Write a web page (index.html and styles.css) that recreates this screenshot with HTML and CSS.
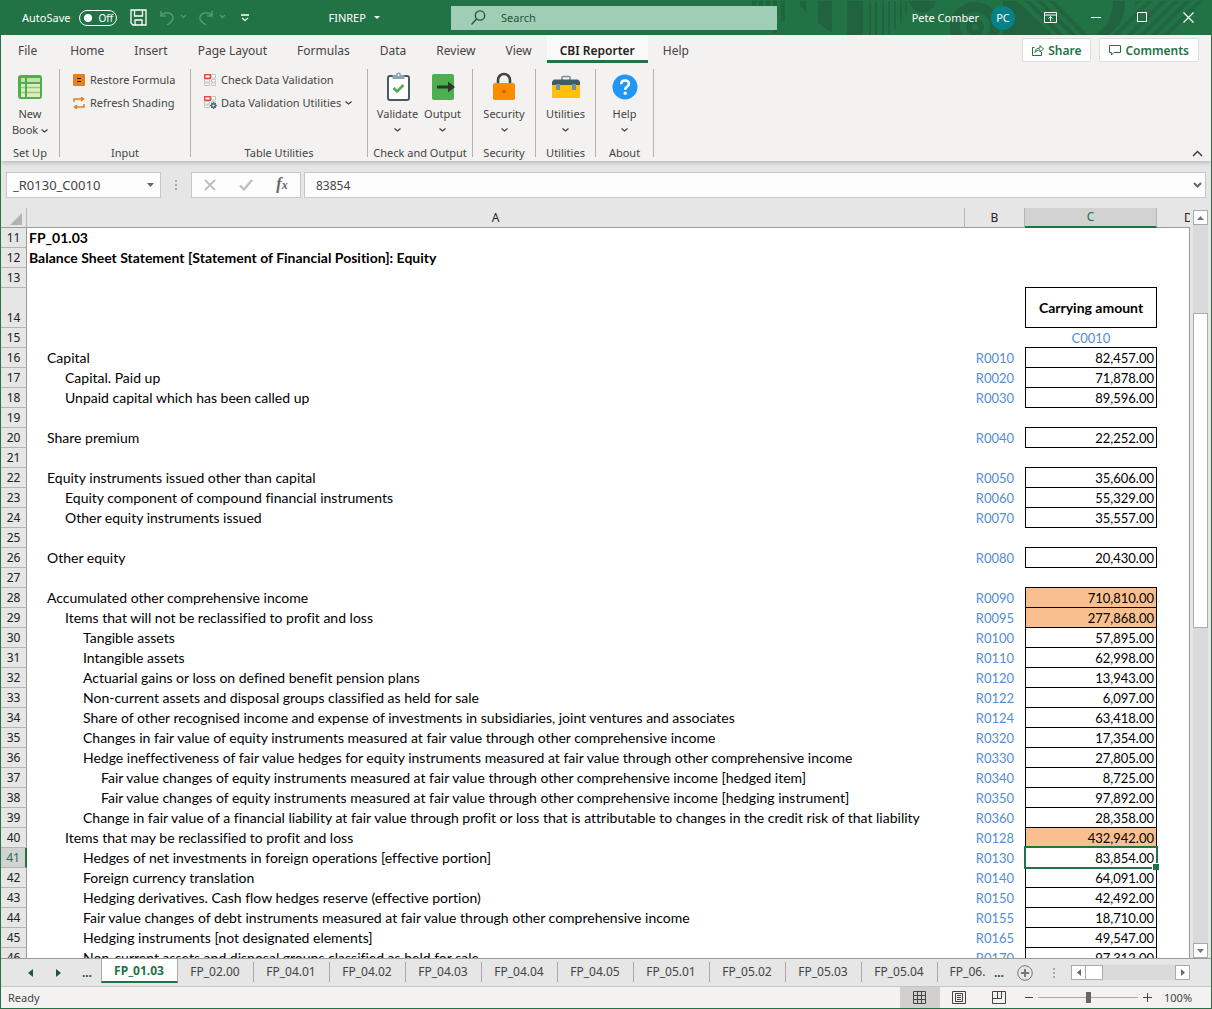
FILE: index.html
```html
<!DOCTYPE html>
<html lang="en">
<head>
<meta charset="utf-8">
<title>FINREP</title>
<link rel="stylesheet" href="styles.css">
</head>
<body>
<div class="window">

<header class="titlebar">
  <svg class="pattern" viewBox="0 0 460 35" width="460" height="35" aria-hidden="true">
    <g fill="#21633f">
      <path d="M1 1h4v5h-4zM8 1h4v5h-4zM15 1h4v5h-4zM22 1h4v5h-4zM30 1h4v20h-4zM22 29h4v4h-4z"/>
      <path d="M49 1h6v12l-6-8zM67 1h14v32l-14-10zM96 1h14v34h-14z"/>
      <path d="M110 1h2v34h-2zM118 1h2v34h-2zM124 1h2v34h-2zM131 1h2v34h-2zM137 1h2v33h-2zM143 1h2v28h-2zM149 1h2v22h-2zM154 1h2v14h-2z"/>
      <path d="M158 1h27q-3 11-14 12-10-1-13-12z"/>
      <path d="M252 1h14l36 34h-50zM274 1h5l34 34h-6zM286 1h5l34 34h-6zM298 1h5l34 34h-6z"/>
      <path d="M362 1h12c1 14-6 26-16 34h-14c11-7 18-19 18-34z"/>
      <path d="M384 1h6l-6 5zM396 1h6l-34 34h-6zM410 1h6l-34 34h-6zM422 1h6l-34 34h-6zM434 1h6l-34 34h-6zM446 1h6l-34 34h-6z" opacity=".7"/>
    </g>
    <g fill="none" stroke="#21633f"><circle cx="224" cy="27" r="20" stroke-width="10"/><circle cx="224" cy="27" r="6" stroke-width="6"/></g>
  </svg>
  <div class="quick">
    <label class="autosave" for="autosave">AutoSave</label>
    <span class="toggle"><input type="checkbox" id="autosave"><span>Off</span></span>
    <button class="qbtn save" aria-label="Save"><svg width="17" height="17" viewBox="0 0 17 17" fill="none" stroke="#fff" stroke-width="1.3"><path d="M1 1h15v15H3l-2-2zM4.500 1v6h8V1M5 16v-5h7v5"/></svg></button>
    <button class="qbtn undo" aria-label="Undo"><svg width="27" height="16" viewBox="0 0 27 16" fill="none" stroke="#4f9a70" stroke-width="1.500"><path d="M1 1v5h5M1 6c4-6 13-3 12 3-.500 2-3 4-6 6"/><path d="M21 5l2.500 2.500L26 5"/></svg></button>
    <button class="qbtn redo" aria-label="Redo"><svg width="28" height="16" viewBox="0 0 28 16" fill="none" stroke="#4f9a70" stroke-width="1.500"><path d="M14 1v5H9M14 6C10 0 1 3 2 9c.500 2 3 4 6 6"/><path d="M22 5l2.500 2.500L27 5"/></svg></button>
    <button class="qbtn more" aria-label="Customise toolbar"><svg width="8" height="8" viewBox="0 0 8 8" fill="none" stroke="#fff" stroke-width="1.300"><path d="M0 1h8M1 4l3 2.500L7 4"/></svg></button>
    <button class="docname">FINREP <svg width="6" height="3" viewBox="0 0 6 3"><path d="M0 0h6L3 3z" fill="#fff"/></svg></button>
  </div>
  <div class="search">
    <svg width="15" height="15" viewBox="0 0 15 15" fill="none" stroke="#185c37" stroke-width="1.300"><circle cx="9" cy="5.500" r="4.700"/><path d="M5.500 9L.5 14.500"/></svg>
    <input type="text" aria-label="Search" placeholder="Search">
  </div>
  <div class="account">
    <span class="user">Pete Comber</span>
    <span class="avatar">PC</span>
    <button class="wbtn" aria-label="Ribbon display"><svg width="13" height="11" viewBox="0 0 13 11" fill="none" stroke="#fff"><path d="M.5.5h12v10H.5zM.5 3h12M6.500 9.500v-5M4.500 6.500l2-2 2 2"/></svg></button>
    <button class="wbtn" aria-label="Minimise"><svg width="11" height="11" viewBox="0 0 11 11" stroke="#fff"><path d="M0 5.500h10"/></svg></button>
    <button class="wbtn" aria-label="Maximise"><svg width="11" height="11" viewBox="0 0 11 11" fill="none" stroke="#fff"><path d="M.5.5h9v9h-9z"/></svg></button>
    <button class="wbtn" aria-label="Close"><svg width="11" height="11" viewBox="0 0 11 11" stroke="#fff" stroke-width="1.200"><path d="M.5.5l10 10M10.500.5l-10 10"/></svg></button>
  </div>
</header>

<nav class="menu">
  <button>File</button><button>Home</button><button>Insert</button><button>Page Layout</button><button>Formulas</button><button>Data</button><button>Review</button><button>View</button><button class="active">CBI Reporter</button><button>Help</button>
  <div class="actions">
    <button class="action"><svg width="12" height="12" viewBox="0 0 12 12" fill="none" stroke="#217346"><path d="M2.500 3.500h-2v8h9V8M3 8.500c0-3 2-4.500 5-4.500V1.500l3.500 3.500L8 8V6C6 6 4 6.500 3 8.500z"/></svg>Share</button>
    <button class="action"><svg width="12" height="12" viewBox="0 0 12 12" fill="none" stroke="#217346"><path d="M.5 1.500h11v7H5L2.500 11V8.500h-2z"/></svg>Comments</button>
  </div>
</nav>

<section class="ribbon">
  <div class="group setup">
    <div class="tools">
      <button class="big"><svg width="26" height="26" viewBox="0 0 26 26"><rect x="1" y="1" width="24" height="24" rx="3" fill="#4caf50"/><path d="M4 4h4v4H4zM10 4h13v4H10z" fill="#c5e1a5"/><path d="M4 10h4v13H4zM10 10h13v13H10z" fill="#dcedc8"/><path d="M4 13.500h4M10 13.500h13M4 18.500h4M10 18.500h13" stroke="#9ccc65" stroke-width="1.500"/></svg><span>New</span><span>Book <svg class="chev" width="7" height="4" viewBox="0 0 7 4"><path d="M.5.5l3 2.500 3-2.500"/></svg></span></button>
    </div>
    <h2>Set Up</h2>
  </div>
  <div class="group input">
    <div class="list">
      <button class="small"><svg width="12" height="12" viewBox="0 0 12 12"><rect width="12" height="12" rx="1" fill="#e67e22"/><path d="M4 4.500h4M4 7.500h4" stroke="#222"/></svg>Restore Formula</button>
      <button class="small"><svg width="12" height="12" viewBox="0 0 12 12" fill="none" stroke="#e67e22" stroke-width="1.500"><path d="M1 5V2h9M8 0l2.500 2L8 4M11 7v3H2M4 8L1.500 10 4 12"/></svg>Refresh Shading</button>
    </div>
    <h2>Input</h2>
  </div>
  <div class="group tables">
    <div class="list">
      <button class="small"><svg width="13" height="12" viewBox="0 0 13 12"><path d="M7.500.5h4v3.500h-4zM.5 5.500h5v2.500h-5zM7.500 5.500h4v2.500h-4zM.5 9h5v2.500h-5zM7.500 9h4v2.500h-4z" fill="#fff" stroke="#c4c4c4"/><path d="M.7.7h5.600v3.600H.7z" fill="#fff" stroke="#e74c3c" stroke-width="1.400"/></svg>Check Data Validation</button>
      <button class="small"><svg width="13" height="13" viewBox="0 0 13 13"><path d="M7.500.5h4v3.500h-4zM.5 5.500h5v2.500h-5zM7.500 5.500h4v2.500h-4zM.5 9h5v2.500h-5z" fill="#fff" stroke="#c4c4c4"/><path d="M.7.7h5.600v3.600H.7z" fill="#fff" stroke="#e74c3c" stroke-width="1.400"/><g fill="none" stroke="#546e7a"><circle cx="9.500" cy="9.500" r="2" stroke-width="1.800"/><path d="M9.500 6v1.500M9.500 11.500V13M6 9.500h1.500M11.500 9.500H13M7 7l1 1M11 11l1 1M12 7l-1 1M8 11l-1 1"/></g></svg>Data Validation Utilities <svg class="chev" width="7" height="4" viewBox="0 0 7 4"><path d="M.5.5l3 2.500 3-2.500"/></svg></button>
    </div>
    <h2>Table Utilities</h2>
  </div>
  <div class="group check">
    <div class="tools">
      <button class="big"><svg width="28" height="30" viewBox="0 0 28 30"><rect x="4" y="4" width="21" height="24" rx="2" fill="#fff" stroke="#455a64" stroke-width="2"/><path d="M8.500 3H12a2.500 2.500 0 0 1 5 0h3.500v4h-12z" fill="#90a4ae"/><circle cx="14.500" cy="3" r="1" fill="#fff"/><path d="M9.500 16l3.500 3.500 6.500-6.500" fill="none" stroke="#4caf50" stroke-width="2.500"/></svg><span>Validate</span><svg class="chev" width="7" height="4" viewBox="0 0 7 4"><path d="M.5.5l3 2.500 3-2.500"/></svg></button>
      <button class="big"><svg width="26" height="28" viewBox="0 0 26 28"><rect x="2" y="1" width="22" height="26" rx="2" fill="#4caf50"/><path d="M7 12.500h11V8.500l7 5.500-7 5.500v-4H7z" fill="#333"/></svg><span>Output</span><svg class="chev" width="7" height="4" viewBox="0 0 7 4"><path d="M.5.5l3 2.500 3-2.500"/></svg></button>
    </div>
    <h2>Check and Output</h2>
  </div>
  <div class="group security">
    <div class="tools">
      <button class="big"><svg width="24" height="28" viewBox="0 0 24 28"><path d="M6 12V7a6 6 0 0 1 12 0v5" fill="none" stroke="#424242" stroke-width="2.600"/><rect x="1" y="10" width="22" height="17" rx="2" fill="#fb8c00"/><circle cx="12" cy="18.500" r="2" fill="#c76a00"/></svg><span>Security</span><svg class="chev" width="7" height="4" viewBox="0 0 7 4"><path d="M.5.5l3 2.500 3-2.500"/></svg></button>
    </div>
    <h2>Security</h2>
  </div>
  <div class="group utils">
    <div class="tools">
      <button class="big"><svg width="28" height="28" viewBox="0 0 28 28"><path d="M10 7V4.500q0-1 1-1h6q1 0 1 1V7" fill="none" stroke="#78909c" stroke-width="1.600"/><path d="M0 12h28v13H0z" fill="#ffc107"/><path d="M2 6.500h24l2 2V12H0V8.500z" fill="#455a64"/><path d="M4 11h4v6H4zM20 11h4v6h-4z" fill="#78909c"/></svg><span>Utilities</span><svg class="chev" width="7" height="4" viewBox="0 0 7 4"><path d="M.5.5l3 2.500 3-2.500"/></svg></button>
    </div>
    <h2>Utilities</h2>
  </div>
  <div class="group about">
    <div class="tools">
      <button class="big"><svg width="26" height="26" viewBox="0 0 26 26"><circle cx="13" cy="13" r="12.500" fill="#2196f3"/><path d="M9.200 10.200c0-5 7.800-4.800 7.800-.4 0 2.800-3.800 2.800-3.800 6" fill="none" stroke="#fff" stroke-width="2.600"/><circle cx="13.200" cy="19.200" r="1.600" fill="#fff"/></svg><span>Help</span><svg class="chev" width="7" height="4" viewBox="0 0 7 4"><path d="M.5.5l3 2.500 3-2.500"/></svg></button>
    </div>
    <h2>About</h2>
  </div>
  <button class="collapse" aria-label="Collapse ribbon"><svg width="11" height="7" viewBox="0 0 11 7" fill="none" stroke="#333" stroke-width="1.400"><path d="M1 6l4.500-4.500L10 6"/></svg></button>
</section>

<section class="formulabar">
  <div class="namebox"><input type="text" aria-label="Name box" value="_R0130_C0010"><button aria-label="Names"><svg width="7" height="4" viewBox="0 0 7 4"><path d="M0 0h7L3.500 4z" fill="#666"/></svg></button></div>
  <span class="dots"></span>
  <div class="fxbox">
    <button aria-label="Cancel"><svg width="12" height="12" viewBox="0 0 12 12" stroke="#bdbdbd" stroke-width="1.800"><path d="M1 1l10 10M11 1L1 11"/></svg></button>
    <button aria-label="Enter"><svg width="14" height="12" viewBox="0 0 14 12" fill="none" stroke="#bdbdbd" stroke-width="2.200"><path d="M1 6.500l4 4L13 1"/></svg></button>
    <button aria-label="Insert function" class="fx"><span>f<small>x</small></span></button>
  </div>
  <div class="formula"><input type="text" aria-label="Formula" value="83854"><button aria-label="Expand formula bar"><svg width="9" height="6" viewBox="0 0 9 6" fill="none" stroke="#666" stroke-width="2"><path d="M1 1l3.500 3.500L8 1"/></svg></button></div>
</section>

<main class="sheet">
  <div class="grid">
  <table>
    <colgroup><col class="c-row"><col><col class="c-b"><col class="c-c"><col class="c-d"></colgroup>
    <thead><tr><th class="corner"><svg width="12" height="12" viewBox="0 0 12 12"><path d="M12 0v12H0z" fill="#b2b2b2"/></svg></th><th scope="col">A</th><th scope="col">B</th><th scope="col" class="current">C</th><th scope="col" class="cut">D</th></tr></thead>
    <tbody>
    <tr><th scope="row">11</th><td class="title">FP_01.03</td><td></td><td></td><td></td></tr>
    <tr><th scope="row">12</th><td class="title">Balance Sheet Statement [Statement of Financial Position]: Equity</td><td></td><td></td><td></td></tr>
    <tr><th scope="row">13</th><td></td><td></td><td class="cap"></td><td></td></tr>
    <tr class="tall"><th scope="row">14</th><td></td><td></td><td class="box heading">Carrying amount</td><td></td></tr>
    <tr><th scope="row">15</th><td></td><td></td><td class="cap code">C0010</td><td></td></tr>
    <tr><th scope="row">16</th><td class="i1">Capital</td><td class="code">R0010</td><td class="box">82,457.00</td><td></td></tr>
    <tr><th scope="row">17</th><td class="i2">Capital. Paid up</td><td class="code">R0020</td><td class="box">71,878.00</td><td></td></tr>
    <tr><th scope="row">18</th><td class="i2">Unpaid capital which has been called up</td><td class="code">R0030</td><td class="box">89,596.00</td><td></td></tr>
    <tr><th scope="row">19</th><td></td><td></td><td class="cap"></td><td></td></tr>
    <tr><th scope="row">20</th><td class="i1">Share premium</td><td class="code">R0040</td><td class="box">22,252.00</td><td></td></tr>
    <tr><th scope="row">21</th><td></td><td></td><td class="cap"></td><td></td></tr>
    <tr><th scope="row">22</th><td class="i1">Equity instruments issued other than capital</td><td class="code">R0050</td><td class="box">35,606.00</td><td></td></tr>
    <tr><th scope="row">23</th><td class="i2">Equity component of compound financial instruments</td><td class="code">R0060</td><td class="box">55,329.00</td><td></td></tr>
    <tr><th scope="row">24</th><td class="i2">Other equity instruments issued</td><td class="code">R0070</td><td class="box">35,557.00</td><td></td></tr>
    <tr><th scope="row">25</th><td></td><td></td><td class="cap"></td><td></td></tr>
    <tr><th scope="row">26</th><td class="i1">Other equity</td><td class="code">R0080</td><td class="box">20,430.00</td><td></td></tr>
    <tr><th scope="row">27</th><td></td><td></td><td class="cap"></td><td></td></tr>
    <tr><th scope="row">28</th><td class="i1">Accumulated other comprehensive income</td><td class="code">R0090</td><td class="box sum">710,810.00</td><td></td></tr>
    <tr><th scope="row">29</th><td class="i2">Items that will not be reclassified to profit and loss</td><td class="code">R0095</td><td class="box sum">277,868.00</td><td></td></tr>
    <tr><th scope="row">30</th><td class="i3">Tangible assets</td><td class="code">R0100</td><td class="box">57,895.00</td><td></td></tr>
    <tr><th scope="row">31</th><td class="i3">Intangible assets</td><td class="code">R0110</td><td class="box">62,998.00</td><td></td></tr>
    <tr><th scope="row">32</th><td class="i3">Actuarial gains or loss on defined benefit pension plans</td><td class="code">R0120</td><td class="box">13,943.00</td><td></td></tr>
    <tr><th scope="row">33</th><td class="i3">Non-current assets and disposal groups classified as held for sale</td><td class="code">R0122</td><td class="box">6,097.00</td><td></td></tr>
    <tr><th scope="row">34</th><td class="i3">Share of other recognised income and expense of investments in subsidiaries, joint ventures and associates</td><td class="code">R0124</td><td class="box">63,418.00</td><td></td></tr>
    <tr><th scope="row">35</th><td class="i3">Changes in fair value of equity instruments measured at fair value through other comprehensive income</td><td class="code">R0320</td><td class="box">17,354.00</td><td></td></tr>
    <tr><th scope="row">36</th><td class="i3">Hedge ineffectiveness of fair value hedges for equity instruments measured at fair value through other comprehensive income</td><td class="code">R0330</td><td class="box">27,805.00</td><td></td></tr>
    <tr><th scope="row">37</th><td class="i4">Fair value changes of equity instruments measured at fair value through other comprehensive income [hedged item]</td><td class="code">R0340</td><td class="box">8,725.00</td><td></td></tr>
    <tr><th scope="row">38</th><td class="i4">Fair value changes of equity instruments measured at fair value through other comprehensive income [hedging instrument]</td><td class="code">R0350</td><td class="box">97,892.00</td><td></td></tr>
    <tr><th scope="row">39</th><td class="i3">Change in fair value of a financial liability at fair value through profit or loss that is attributable to changes in the credit risk of that liability</td><td class="code">R0360</td><td class="box">28,358.00</td><td></td></tr>
    <tr><th scope="row">40</th><td class="i2">Items that may be reclassified to profit and loss</td><td class="code">R0128</td><td class="box sum">432,942.00</td><td></td></tr>
    <tr><th scope="row" class="current">41</th><td class="i3">Hedges of net investments in foreign operations [effective portion]</td><td class="code">R0130</td><td class="box selected">83,854.00</td><td></td></tr>
    <tr><th scope="row">42</th><td class="i3">Foreign currency translation</td><td class="code">R0140</td><td class="box">64,091.00</td><td></td></tr>
    <tr><th scope="row">43</th><td class="i3">Hedging derivatives. Cash flow hedges reserve (effective portion)</td><td class="code">R0150</td><td class="box">42,492.00</td><td></td></tr>
    <tr><th scope="row">44</th><td class="i3">Fair value changes of debt instruments measured at fair value through other comprehensive income</td><td class="code">R0155</td><td class="box">18,710.00</td><td></td></tr>
    <tr><th scope="row">45</th><td class="i3">Hedging instruments [not designated elements]</td><td class="code">R0165</td><td class="box">49,547.00</td><td></td></tr>
    <tr><th scope="row">46</th><td class="i3">Non-current assets and disposal groups classified as held for sale</td><td class="code">R0170</td><td class="box">97,312.00</td><td></td></tr>
    </tbody>
  </table>
  </div>
  <div class="vscroll">
    <button aria-label="Scroll up"><svg width="7" height="4" viewBox="0 0 7 4"><path d="M0 4h7L3.500 0z" fill="#777"/></svg></button>
    <span class="above"></span><span class="thumb"></span><span class="below"></span>
    <button aria-label="Scroll down"><svg width="7" height="4" viewBox="0 0 7 4"><path d="M0 0h7L3.500 4z" fill="#777"/></svg></button>
  </div>
</main>

<nav class="tabs">
  <div class="tabnav">
    <button aria-label="Previous sheet"><svg width="5" height="8" viewBox="0 0 5 8"><path d="M5 0v8L0 4z" fill="#185c37"/></svg></button>
    <button aria-label="Next sheet"><svg width="5" height="8" viewBox="0 0 5 8"><path d="M0 0v8l5-4z" fill="#185c37"/></svg></button>
    <button class="dotsbtn">...</button>
  </div>
  <div class="tablist"><button class="tab active">FP_01.03</button><button class="tab">FP_02.00</button><button class="tab">FP_04.01</button><button class="tab">FP_04.02</button><button class="tab">FP_04.03</button><button class="tab">FP_04.04</button><button class="tab">FP_04.05</button><button class="tab">FP_05.01</button><button class="tab">FP_05.02</button><button class="tab">FP_05.03</button><button class="tab">FP_05.04</button><button class="tab partial">FP_06.</button></div>
  <button class="dotsbtn">...</button>
  <button class="add" aria-label="New sheet"><svg width="16" height="16" viewBox="0 0 16 16" fill="none" stroke="#767676"><circle cx="8" cy="8" r="7.300"/><path d="M8 4v8M4 8h8" stroke-width="2"/></svg></button>
  <span class="dots"></span>
  <div class="hscroll">
    <button aria-label="Scroll left"><svg width="4" height="7" viewBox="0 0 4 7"><path d="M4 0v7L0 3.500z" fill="#666"/></svg></button>
    <span class="thumb"></span><span class="track"></span>
    <button aria-label="Scroll right"><svg width="4" height="7" viewBox="0 0 4 7"><path d="M0 0v7l4-3.500z" fill="#666"/></svg></button>
  </div>
</nav>

<footer class="status">
  <span class="ready">Ready</span>
  <button class="view active" aria-label="Normal view"><svg width="13" height="13" viewBox="0 0 13 13" fill="none" stroke="#444"><path d="M.5.5h12v12H.5zM4.500.5v12M8.500.5v12M.5 4.500h12M.5 8.500h12"/></svg></button>
  <button class="view" aria-label="Page layout view"><svg width="14" height="13" viewBox="0 0 14 13" fill="none" stroke="#444"><path d="M.5.5h13v12H.5zM3.500 2.500h7v8h-7zM5 4.500h4M5 6.500h4M5 8.500h4"/></svg></button>
  <button class="view" aria-label="Page break view"><svg width="14" height="13" viewBox="0 0 14 13" fill="none" stroke="#444"><path d="M.5.5h13v12H.5zM.5 7.500h9V.5M5.500.5v7"/></svg></button>
  <button class="zoombtn" aria-label="Zoom out"><svg width="9" height="9" viewBox="0 0 9 9" stroke="#444"><path d="M0 4.500h8"/></svg></button>
  <input class="zoom" type="range" min="10" max="190" value="100" aria-label="Zoom">
  <button class="zoombtn" aria-label="Zoom in"><svg width="9" height="9" viewBox="0 0 9 9" stroke="#444"><path d="M0 4.500h9M4.500 0v9"/></svg></button>
  <span class="percent">100%</span>
</footer>
</div>
</body>
</html>
```
FILE: styles.css
```css
* { box-sizing: border-box; }

body {
  margin: 0;
  font-family: "Noto Sans", "Open Sans", sans-serif;
  font-size: 12px;
  color: #444;
}

button, input {
  font: inherit;
  color: inherit;
  background: none;
  border: 0;
  margin: 0;
  padding: 0;
}

button { display: flex; align-items: center; justify-content: center; }
input { min-width: 0; outline: none; }
svg { flex: none; }

.window {
  display: flex;
  flex-direction: column;
  height: 100vh;
  border: 1px solid #217346;
  border-top: 0;
  background: #e6e6e6;
}

/* title bar */
.titlebar {
  position: relative;
  flex: none;
  display: grid;
  grid-template-columns: 450fr 326fr 434fr;
  height: 35px;
  background: #217346;
  color: #fff;
  font-size: 11px;
}
.pattern { position: absolute; right: 0; top: 0; }
.quick { display: flex; align-items: center; padding-left: 21px; }
.toggle {
  display: flex;
  align-items: center;
  gap: 6px;
  width: 38px;
  height: 16px;
  margin-left: 9px;
  padding-left: 4px;
  border: 1px solid #fff;
  border-radius: 8px;
  font-size: 10px;
}
.toggle input { appearance: none; width: 8px; height: 8px; border-radius: 50%; background: #fff; }
.save { margin-left: 13px; }
.undo { margin-left: 13px; }
.redo { margin-left: 11px; }
.more { margin-left: 15px; }
.docname { gap: 8px; margin-left: 79px; }
.search {
  position: relative;
  display: flex;
  align-items: center;
  gap: 15px;
  height: 24px;
  margin-top: 6px;
  padding: 0 0 2px 20px;
  background: #a0cdb5;
  color: #185c37;
}
.search input { flex: 1; }
.search input::placeholder { color: #185c37; opacity: 1; }
.account { position: relative; display: flex; align-items: center; justify-content: flex-end; }
.avatar {
  width: 24px;
  margin: 0 12px 0 12px;
  border-radius: 50%;
  background: #038387;
  line-height: 24px;
  text-align: center;
}
.wbtn { width: 46px; height: 34px; }

/* ribbon tabs */
.menu { flex: none; display: flex; height: 31px; padding-left: 2px; background: #f3f2f1; }
.menu > button { height: 28px; padding: 5px 15px 0; border-bottom: 3px solid transparent; }
.menu > button:first-child { padding-right: 18px; }
.menu > .active { padding: 5px 13px 0; border-color: #217346; background: #faf9f8; color: #222; font-weight: 600; }
.actions { display: flex; gap: 8px; margin-left: auto; padding: 3px 12px 0 0; }
.action {
  gap: 4px;
  height: 24px;
  padding: 0 9px;
  border: 1px solid #e1dfdd;
  border-radius: 2px;
  background: #fff;
  color: #217346;
  font-weight: 600;
}

/* ribbon groups */
.ribbon {
  position: relative;
  z-index: 1;
  flex: none;
  display: flex;
  height: 95px;
  padding: 3px 0 4px;
  background: #f3f2f1;
  box-shadow: 0 1px 5px #aaa;
  clip-path: inset(0 0 -8px);
  font-size: 11px;
}
.group {
  display: flex;
  flex-direction: column;
  justify-content: space-between;
  border-right: 1px solid #b3b0ad;
}
.group h2 { margin: 0; font-size: 11px; font-weight: 400; line-height: 8px; text-align: center; white-space: nowrap; }
.setup { width: 59px; }
.input { width: 131px; }
.tables { width: 177px; }
.check { width: 105px; }
.security { width: 63px; }
.utils { width: 60px; }
.about { width: 58px; }
.tools { display: flex; justify-content: center; }
.big { flex-direction: column; justify-content: flex-start; width: 45px; line-height: 16px; }
.big > svg:first-child { height: 30px; margin: 3px 0 4px; }
.big > .chev { margin-top: 6px; }
.chev { fill: none; stroke: #444; stroke-width: 1.3; vertical-align: middle; }
.list { padding-left: 13px; }
.small { gap: 5px; height: 23px; padding-bottom: 2px; white-space: nowrap; }
.tables .small { gap: 4px; }
.collapse { align-self: flex-end; margin-left: auto; padding-right: 8px; }

/* formula bar */
.formulabar { flex: none; display: flex; height: 47px; padding: 11px 5px 10px; font-size: 12px; }
.namebox, .fxbox, .formula { display: flex; border: 1px solid #c6c6c6; background: #fdfdfd; }
.namebox { width: 155px; padding: 0 6px; font-size: 13px; }
.namebox input { flex: 1; }
.dots {
  align-self: center;
  width: 2px;
  height: 10px;
  margin: 0 14px;
  background: repeating-linear-gradient(#aaa 0 2px, transparent 2px 4px);
}
.fxbox { width: 110px; margin-right: 3px; }
.fxbox button { flex: 1; }
.fx { padding-bottom: 2px; font-family: "Liberation Serif", serif; font-size: 16px; font-style: italic; font-weight: 700; color: #666; }
.fx small { font-size: 12px; }
.formula { flex: 1; padding: 0 3px 0 11px; }
.formula input { flex: 1; }

/* worksheet */
.sheet { flex: 1; min-height: 0; display: flex; gap: 3px; padding-right: 3px; }
.grid { flex: 1; min-width: 0; overflow: hidden; }
table {
  width: 100%;
  table-layout: fixed;
  border-collapse: separate;
  border-spacing: 0;
  font-family: Lato, "Noto Sans", sans-serif;
  font-size: 14px;
  font-variant-ligatures: none;
  color: #000;
}
.c-row { width: 26px; }
.c-b { width: 60px; }
.c-c { width: 132px; }
.c-d { width: 33px; }
th, td { height: 20px; padding: 0 2px; line-height: 18px; white-space: nowrap; overflow: hidden; }
th { font-family: "Noto Sans", sans-serif; font-size: 12px; font-weight: 400; color: #222; }
td { background: #fff; text-align: left; }
thead th { border-right: 1px solid #b5b5b5; border-bottom: 1px solid #9b9b9b; }
thead .corner { padding: 0 4px 0 0; text-align: right; }
.corner svg { display: block; margin: 3px 0 0 auto; }
thead th.current { border-bottom: 2px solid #217346; background: #d2d2d2; color: #217346; }
thead .cut { padding-left: 27px; border-right: 0; text-align: left; }
tbody th { padding: 0; border-right: 1px solid #9b9b9b; border-bottom: 1px solid #b5b5b5; background: #e6e6e6; }
tbody th.current { border-right: 2px solid #217346; background: #d2d2d2; color: #217346; }
tbody td:last-child { border-right: 1px solid #9b9b9b; }
.tall th, .tall td { height: 40px; }
.tall th { vertical-align: bottom; }
.title { font-weight: 700; }
.i1 { padding-left: 20px; }
.i2 { padding-left: 38px; }
.i3 { padding-left: 56px; }
.i4 { padding-left: 74px; }
.code { color: #538dd5; font-size: 13px; text-align: center; }
.cap { border-bottom: 1px solid #000; }
.box { border: 1px solid #000; border-top: 0; font-size: 13px; text-align: right; }
.heading { font-size: 14px; font-weight: 700; text-align: center; }
.sum { background: #fabf8f; }
.selected { position: relative; overflow: visible; }
.selected::before { content: ""; position: absolute; inset: -2px -2px; border: 2px solid #217346; }
.selected::after {
  content: "";
  position: absolute;
  right: -3px;
  bottom: -3px;
  width: 6px;
  height: 6px;
  border: solid #fff;
  border-width: 1px 0 0 1px;
  background: #217346;
}

/* scroll bars */
.vscroll { display: flex; flex-direction: column; width: 15px; padding-top: 2px; }
.vscroll button, .hscroll button { flex: none; width: 15px; height: 15px; border: 1px solid #ababab; background: #fff; }
.above, .below, .track { background: #dadada; }
.above { flex: 88; }
.below { flex: 316; }
.thumb { border: 1px solid #ababab; background: #fff; }
.vscroll .thumb { flex: 315; }

/* sheet tabs */
.tabs { flex: none; display: flex; height: 29px; border-top: 1px solid #9b9b9b; border-bottom: 1px solid #c6c6c6; }
.tabnav { display: flex; justify-content: flex-end; gap: 23px; width: 100px; padding-right: 9px; }
.dotsbtn { color: #185c37; font-weight: 700; }
.tabnav .dotsbtn { margin-left: -2px; }
.tablist { flex: 1; min-width: 0; display: flex; overflow: hidden; }
.tab { flex: none; position: relative; width: 76px; height: 24px; padding-right: 2px; }
.tab:not(.active, .partial)::after { content: ""; position: absolute; right: 0; top: 3px; height: 20px; border-right: 1px solid #ababab; }
.tab.active {
  width: 77px;
  padding-right: 1px;
  border: 1px solid #ababab;
  border-top: 0;
  border-bottom: 2px solid #217346;
  background: #fff;
  color: #217346;
  font-weight: 700;
}
.partial { width: 52px; padding: 0 0 0 7px; }
.add { margin-left: 13px; }
.tabs > .dots { margin: 0 16px 0 20px; }
.hscroll { display: flex; align-self: center; width: 119px; height: 15px; margin-right: 21px; }
.hscroll .thumb { width: 18px; margin-left: -1px; }
.track { flex: 1; }

/* status bar */
.status { flex: none; display: flex; align-items: center; height: 21px; background: #f3f2f1; font-size: 11px; }
.ready { margin: 0 auto 0 7px; }
.view { width: 40px; height: 21px; padding-right: 2px; }
.view.active { background: #d2d0ce; }
.zoombtn { width: 18px; height: 21px; }
.zoom { appearance: none; width: 100px; height: 21px; }
.zoom::-webkit-slider-runnable-track { height: 1px; background: #a6a6a6; }
.zoom::-webkit-slider-thumb { appearance: none; width: 5px; height: 11px; margin-top: -5px; background: #666; }
.percent { width: 55px; padding-left: 8px; }
```
